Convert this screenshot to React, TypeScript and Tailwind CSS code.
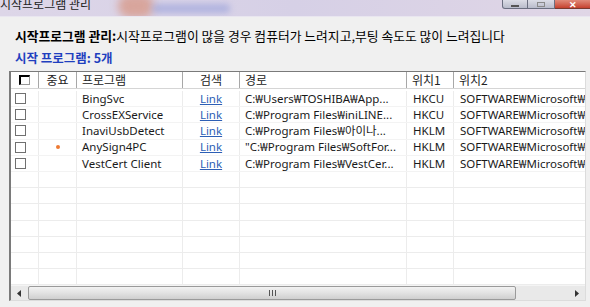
import React from "react";

const rows = [
  { name: "BingSvc", path: "C:₩Users₩TOSHIBA₩App...", loc1: "HKCU", dot: false },
  { name: "CrossEXService", path: "C:₩Program Files₩iniLINE...", loc1: "HKCU", dot: false },
  { name: "InaviUsbDetect", path: "C:₩Program Files₩아이나...", loc1: "HKLM", dot: false },
  { name: "AnySign4PC", path: "\"C:₩Program Files₩SoftFor...", loc1: "HKLM", dot: true },
  { name: "VestCert Client", path: "C:₩Program Files₩VestCer...", loc1: "HKLM", dot: false },
];

const cols = "grid grid-cols-[28px_38px_106px_57px_167px_47px_131px]";

function Box() {
  return <div className="w-[11px] h-[11px] border border-[#707070] bg-white" />;
}

export default function App() {
  const empty = Array.from({ length: 8 });
  return (
    <div
      className="w-[590px] h-[307px] bg-[#f0f0f0] overflow-hidden text-[12px] text-black"
      style={{ fontFamily: '"Noto Sans", "Noto Sans CJK KR", sans-serif' }}
    >
      {/* title bar */}
      <div className="relative h-[17px] bg-gradient-to-r from-[#ddd6e8] via-[#d6d0e6] to-[#e0d6e6] border-b border-[#e9e6f0] overflow-hidden">
        <div className="absolute left-[118px] top-[-6px] w-[36px] h-[24px] rounded-full bg-[#d89a8a] blur-[4px] opacity-80" />
        <div className="absolute left-[152px] top-[4px] w-[78px] h-[9px] rounded bg-[#9fa6dc] blur-[3px] opacity-70" />
        <div
          className="absolute left-0 top-[-4px] leading-[16px] text-[12px] text-[#222]"
          style={{ fontFamily: '"Noto Sans CJK KR", sans-serif' }}
        >
          시작프로그램 관리
        </div>
        <div className="absolute right-0 top-0 flex h-[9px]">
          <div className="w-[26px] h-full bg-gradient-to-b from-[#dcdde6] to-[#b9bccb] border border-[#6b6f80] border-t-0 rounded-bl-[3px] flex items-end justify-center pb-[1px]">
            <div className="w-[8px] h-[2px] bg-white border border-[#555]" />
          </div>
          <div className="w-[27px] h-full bg-gradient-to-b from-[#dcdde6] to-[#b9bccb] border-b border-[#6b6f80] border-r flex items-center justify-center">
            <div className="w-[8px] h-[5px] border border-[#8a8a8a]" />
          </div>
          <div className="w-[35px] h-full bg-gradient-to-b from-[#e08a7a] to-[#c5402e] border-b border-[#7a3a30] flex items-center justify-center text-white text-[9px] font-bold leading-none">
            ✕
          </div>
        </div>
      </div>

      {/* headings */}
      <div className="pl-[15px] pt-[11px]" style={{ fontFamily: '"Noto Sans CJK KR", sans-serif' }}>
        <div className="leading-[16px] whitespace-nowrap text-[12.8px]">
          <span className="font-bold">시작프로그램 관리:</span>
          <span>시작프로그램이 많을 경우 컴퓨터가 느려지고,부팅 속도도 많이 느려집니다</span>
        </div>
        <div className="mt-[6px] leading-[16px] font-bold text-[12.5px] text-[#1f3fbf]">시작 프로그램: 5개</div>
      </div>

      {/* table */}
      <div className="ml-[9px] mt-[5px] w-[577px] h-[230px] border-l-2 border-t border-[#7a7a7a] border-r border-b border-r-[#dcdcdc] border-b-[#dcdcdc] bg-white flex flex-col overflow-hidden">
        {/* header */}
        <div className={`${cols} h-[17px] border-b border-[#d5d5d5] bg-white text-[#222] shrink-0`} style={{ fontFamily: '"Noto Sans CJK KR", sans-serif' }}>
          <div className="border-r border-[#a8a8a8] flex items-center justify-center">
            <div className="w-[11px] h-[10px] border-l-2 border-t-2 border-black border-r border-b border-r-[#9a9a9a] border-b-[#9a9a9a] bg-white" />
          </div>
          <div className="border-r border-[#a8a8a8] flex items-center justify-center leading-none">중요</div>
          <div className="border-r border-[#a8a8a8] flex items-center pl-[5px] leading-none">프로그램</div>
          <div className="border-r border-[#a8a8a8] flex items-center justify-center leading-none">검색</div>
          <div className="border-r border-[#a8a8a8] flex items-center pl-[5px] leading-none">경로</div>
          <div className="border-r border-[#a8a8a8] flex items-center pl-[5px] leading-none">위치1</div>
          <div className="flex items-center pl-[5px] leading-none">위치2</div>
        </div>

        {/* body */}
        <div className="flex-1 overflow-hidden pt-[2px]">
          {rows.map((r) => (
            <div key={r.name} className={`${cols} h-[16.2px] border-b border-[#f3f3f3] text-[11.5px] leading-none`}>
              <div className="border-r border-[#ececec] flex items-center pl-[4px]">
                <Box />
              </div>
              <div className="border-r border-[#ececec] flex items-center justify-center">
                {r.dot && <div className="w-[4px] h-[4px] rounded-full bg-[#ee7a33]" />}
              </div>
              <div className="border-r border-[#ececec] flex items-center pl-[5px] whitespace-nowrap text-[#1a1a1a]">{r.name}</div>
              <div className="border-r border-[#ececec] flex items-center justify-center text-[#2d5fb5] underline">Link</div>
              <div className="border-r border-[#ececec] flex items-center pl-[5px] whitespace-nowrap overflow-hidden text-[#1a1a1a]">{r.path}</div>
              <div className="border-r border-[#ececec] flex items-center pl-[6px] text-[#1a1a1a]">{r.loc1}</div>
              <div className="flex items-center pl-[6px] whitespace-nowrap overflow-hidden text-[#1a1a1a]">SOFTWARE₩Microsoft₩Windows</div>
            </div>
          ))}
          {empty.map((_, i) => (
            <div key={i} className={`${cols} h-[16.2px] border-b border-[#ececec]`}>
              <div className="border-r border-[#ececec]" />
              <div className="border-r border-[#ececec]" />
              <div className="border-r border-[#ececec]" />
              <div className="border-r border-[#ececec]" />
              <div className="border-r border-[#ececec]" />
              <div className="border-r border-[#ececec]" />
              <div />
            </div>
          ))}
        </div>

        {/* horizontal scrollbar */}
        <div className="h-[15px] shrink-0 flex bg-[#e9e9e9] border-t border-[#f4f4f4]">
          <div className="w-[17px] flex items-center justify-center">
            <svg width="5" height="7" viewBox="0 0 5 7"><path d="M4 0 L0 3.5 L4 7 Z" fill="#333" /></svg>
          </div>
          <div className="w-[488px] h-full rounded-[2px] border border-[#9a9a9a] bg-gradient-to-b from-[#f2f2f2] via-[#e2e2e2] to-[#cfcfcf] flex items-center justify-center">
            <div className="flex gap-[2px]">
              <div className="w-[1px] h-[6px] bg-[#555]" />
              <div className="w-[1px] h-[6px] bg-[#555]" />
              <div className="w-[1px] h-[6px] bg-[#555]" />
            </div>
          </div>
          <div className="flex-1" />
          <div className="w-[17px] flex items-center justify-center">
            <svg width="5" height="7" viewBox="0 0 5 7"><path d="M1 0 L5 3.5 L1 7 Z" fill="#333" /></svg>
          </div>
        </div>
      </div>
    </div>
  );
}
